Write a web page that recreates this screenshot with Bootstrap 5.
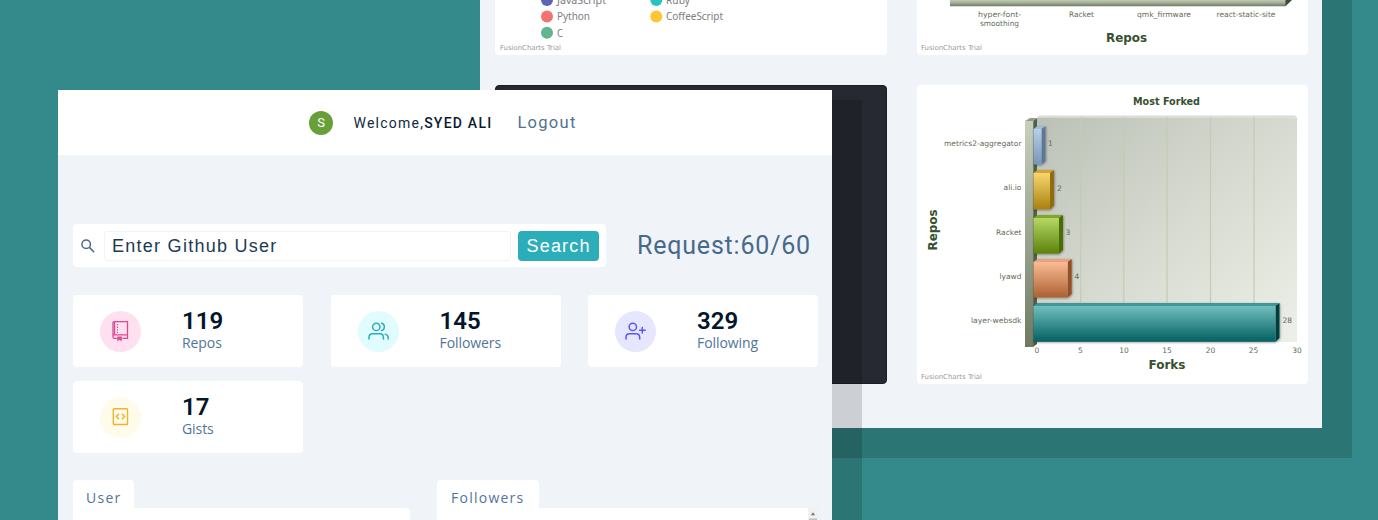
<!DOCTYPE html>
<html lang="en">
<head>
<meta charset="utf-8">
<meta name="viewport" content="width=device-width, initial-scale=1">
<title>Github User Dashboard</title>
<link href="https://cdn.jsdelivr.net/npm/bootstrap@5.3.0/dist/css/bootstrap.min.css" rel="stylesheet">
<style>
  body { margin: 0; background: #348a8a; font-family: Roboto, sans-serif; color: #102a42; }
  .scene { width: 1378px; height: 520px; background: #348a8a; }
  .win { background: #f0f4f8; box-shadow: 20px 20px 0 10px rgba(0,0,0,.15); }
  .win-back { left: 480px; top: -40px; width: 842px; height: 468px; padding: 40px 14px 0 15px; }
  .win-front { left: 58px; top: 90px; width: 774px; height: 600px; }
  .charts { display: grid; grid-template-columns: 392px 391px; column-gap: 30px; row-gap: 30px; grid-template-rows: 55px 299px; }
  .panel { background: #fff; border-radius: 0 0 4px 4px; overflow: hidden; }
  .panel-full { border-radius: 4px; }
  .panel svg { display: block; }
  .panel-dark { background: #262932; border: 1px solid #1b1d24; }
  .vd { font-family: "DejaVu Sans", sans-serif; }
  .topbar { height: 65px; background: #fff; padding-left: 251px; }
  .avatar { width: 24px; height: 24px; background: #689f38; color: #fff; font-size: 13px; }
  .welcome { font-size: 14px; letter-spacing: 1.23px; margin-left: 20.5px; padding-top: 1px; color: #102a42; white-space: nowrap; }
  .welcome b { font-weight: 500; color: #0a1c30; }
  .logout { font-size: 16.5px; letter-spacing: 1.3px; margin-left: 25px; padding-top: 1px; color: #4f7192; }
  .main { padding: 69px 14px 0 15px; }
  .searchbox { width: 533px; height: 43px; background: #fff; border-radius: 4px; padding: 0 7px 0 7px; }
  .field { width: 408px; height: 30px; border: 1px solid #f0f4f8; border-radius: 3px; margin-left: 8px; padding-left: 7px; font: 18px/28px "Liberation Sans", sans-serif; letter-spacing: 1.27px; color: #1c3a56; }
  .go { width: 81px; height: 30px; background: #2caeba; border: 0; border-radius: 4px; color: #fff; padding: 0; margin-left: 7px; font: 18px/30px "Liberation Sans", sans-serif; letter-spacing: 1.2px; }
  .request { font-size: 25px; letter-spacing: .8px; margin-left: 31px; padding-top: 1px; color: #48698c; white-space: nowrap; line-height: 42px; }
  .stats { display: grid; grid-template-columns: repeat(3, 230px); justify-content: space-between; row-gap: 14px; margin-top: 28px; }
  .stat { height: 72px; background: #fff; border-radius: 4px; padding-left: 27px; gap: 41px; }
  .disc { width: 41px; height: 41px; }
  .disc svg { width: 23px; height: 23px; }
  .num { font-size: 24px; line-height: 24px; font-weight: 600; letter-spacing: .1px; color: #02162c; }
  .lbl { font: 14px/20px "Open Sans", sans-serif; letter-spacing: -.08px; color: #52759a; }
  .pink { background: #ffe0f0; color: #da4a91; }
  .cyan { background: #e0fcff; color: #2caeba; }
  .violet { background: #e6e6ff; color: #5d55fa; }
  .yellow { background: #fffbea; color: #f0b429; }
  .boxes { display: grid; grid-template-columns: 337px 381px; column-gap: 27px; margin-top: 27px; }
  .tab { display: inline-block; height: 28px; background: #fff; border-radius: 4px 4px 0 0; padding: 0 13px; font: 14px/36px "Open Sans", sans-serif; letter-spacing: 1.25px; color: #52759a; vertical-align: top; }
  .tab-wide { padding: 0 14px; }
  .body-box { height: 120px; background: #fff; border-radius: 0 4px 0 0; }
  .scroller { width: 10px; background: #f1f1f1; }
  .scroller svg { display: block; }
</style>
</head>
<body>
<div class="scene position-relative overflow-hidden">

  <section class="win win-back position-absolute">
    <div class="charts">
      <div class="panel">
        <svg width="392" height="55" viewBox="495 0 392 55">
          <g font-family="'Noto Sans', sans-serif" font-size="11.200" fill="#7d7d7d">
            <circle cx="547" cy="0" r="6" fill="#5d62b5"/><text x="557" y="4" textLength="49" lengthAdjust="spacingAndGlyphs">JavaScript</text>
            <circle cx="656.300" cy="0" r="6" fill="#29c3be"/><text x="666" y="4" textLength="24" lengthAdjust="spacingAndGlyphs">Ruby</text>
            <circle cx="547" cy="16.500" r="6" fill="#f2726f"/><text x="557" y="20.400" textLength="33" lengthAdjust="spacingAndGlyphs">Python</text>
            <circle cx="656.300" cy="16.500" r="6" fill="#ffc533"/><text x="666" y="20.400" textLength="57" lengthAdjust="spacingAndGlyphs">CoffeeScript</text>
            <circle cx="547" cy="32.800" r="6" fill="#62b58f"/><text x="557" y="36.800" textLength="6" lengthAdjust="spacingAndGlyphs">C</text>
          </g>
          <text class="vd" x="500" y="50" font-size="6.900" fill="#999" textLength="61" lengthAdjust="spacingAndGlyphs">FusionCharts Trial</text>
        </svg>
      </div>
      <div class="panel">
        <svg width="391" height="55" viewBox="917 0 391 55">
          <defs><linearGradient id="base" x2="0" y2="1"><stop stop-color="#c0c9b4"/><stop offset=".4" stop-color="#a8b199"/><stop offset="1" stop-color="#6d785e"/></linearGradient></defs>
          <path fill="url(#base)" d="M950 0h336v6.300H950z"/><path fill="#3f4938" d="M1285.500 0h6.500l-6.500 6.300z"/>
          <g class="vd" font-size="7.500" fill="#5f6c56" text-anchor="middle">
            <text x="999.500" y="16.700" textLength="43" lengthAdjust="spacingAndGlyphs">hyper-font-</text><text x="999.500" y="25.500" textLength="39" lengthAdjust="spacingAndGlyphs">smoothing</text>
            <text x="1081.500" y="16.700" textLength="25" lengthAdjust="spacingAndGlyphs">Racket</text><text x="1164" y="16.700" textLength="54" lengthAdjust="spacingAndGlyphs">qmk_firmware</text><text x="1246" y="16.700" textLength="59" lengthAdjust="spacingAndGlyphs">react-static-site</text>
          </g>
          <text class="vd" x="1126.500" y="42" font-size="12" font-weight="700" fill="#37502e" text-anchor="middle" textLength="41" lengthAdjust="spacingAndGlyphs">Repos</text>
          <text class="vd" x="921" y="50" font-size="6.900" fill="#999" textLength="61" lengthAdjust="spacingAndGlyphs">FusionCharts Trial</text>
        </svg>
      </div>
      <div class="panel panel-full panel-dark"></div>
      <div class="panel panel-full">
        <svg width="391" height="299" viewBox="917 85 391 299">
          <defs>
            <linearGradient id="wall" x2="1" y2="1"><stop stop-color="#bcc1b8"/><stop offset=".5" stop-color="#d6dad0"/><stop offset="1" stop-color="#edf0e8"/></linearGradient>
            <linearGradient id="post" x2="0" y2="1"><stop stop-color="#c7d0bd"/><stop offset="1" stop-color="#6f7a63"/></linearGradient>
            <linearGradient id="b1" x2="0" y2="1"><stop stop-color="#b9d0e8"/><stop offset="1" stop-color="#7796b5"/></linearGradient>
            <linearGradient id="b2" x2="0" y2="1"><stop stop-color="#f8d66f"/><stop offset="1" stop-color="#a9800f"/></linearGradient>
            <linearGradient id="b3" x2="0" y2="1"><stop stop-color="#b5d766"/><stop offset="1" stop-color="#5b820b"/></linearGradient>
            <linearGradient id="b4" x2="0" y2="1"><stop stop-color="#fbbb94"/><stop offset="1" stop-color="#ab6133"/></linearGradient>
            <linearGradient id="b5" x2="0" y2="1"><stop stop-color="#70bfbe"/><stop offset="1" stop-color="#046061"/></linearGradient>
            <filter id="soft" x="-20%" y="-20%" width="150%" height="150%"><feDropShadow dx=".6" dy=".8" stdDeviation=".8" flood-opacity=".4"/></filter>
          </defs>
          <text class="vd" x="1166.500" y="105" font-size="9.900" font-weight="700" fill="#37502e" text-anchor="middle" textLength="67" lengthAdjust="spacingAndGlyphs">Most Forked</text>
          <path fill="#d9ddd4" d="M1039 115.500h256l2 2h-260z"/>
          <path fill="url(#wall)" d="M1037 117.500h260V342h-260z"/>
          <path stroke="#c3ccb3" stroke-width="1.200" d="M1080.700 117v225M1123.800 117v225M1167 117v225M1210.500 117v225M1254 117v225"/>
          <path fill="#535f4c" d="M1033 121l4-3v226l-4 3z"/>
          <path fill="url(#post)" d="M1025 121h8.300v226h-8.300z"/>
          <path fill="#929f87" d="M1025 121l5-3h7l-3.700 3z"/>
          <g filter="url(#soft)"><path fill="#9fbddb" d="M1033.500 129l4-3h8l-4 3z"/><path fill="#5d7897" d="M1041.500 129l4-3v35l-4 3.500z"/><path fill="url(#b1)" d="M1033.500 129h8v35.500h-8z"/></g>
          <g filter="url(#soft)"><path fill="#d0a532" d="M1033.500 173l4-3h16.500l-4 3z"/><path fill="#906c0c" d="M1050 173l4-3v35.500l-4 4z"/><path fill="url(#b2)" d="M1033.500 173h16.500v36.500h-16.500z"/></g>
          <g filter="url(#soft)"><path fill="#80a828" d="M1033.500 218l4-3h25.500l-4 3z"/><path fill="#4a6d04" d="M1059 218l4-3v35l-4 3.700z"/><path fill="url(#b3)" d="M1033.500 218h25.500v35.700h-25.500z"/></g>
          <g filter="url(#soft)"><path fill="#e8a27b" d="M1033.500 262l4-3h34.200l-4 3z"/><path fill="#954f27" d="M1067.700 262l4-3v35l-4 3.500z"/><path fill="url(#b4)" d="M1033.500 262h34.200v35.500h-34.200z"/></g>
          <g filter="url(#soft)"><path fill="#3c9897" d="M1033.500 306l4-3h242l-4 3z"/><path fill="#043c3d" d="M1275.500 306l4-3v35l-4 3.700z"/><path fill="url(#b5)" d="M1033.500 306h242v35.700h-242z"/></g>
          <g class="vd" font-size="7.500" fill="#5f6c56">
            <g text-anchor="end">
              <text x="1021.500" y="145.500" textLength="77.500" lengthAdjust="spacingAndGlyphs">metrics2-aggregator</text><text x="1021.500" y="189.500" textLength="18" lengthAdjust="spacingAndGlyphs">ali.io</text><text x="1021.500" y="234.500" textLength="25.500" lengthAdjust="spacingAndGlyphs">Racket</text><text x="1021.500" y="278.500" textLength="22" lengthAdjust="spacingAndGlyphs">lyawd</text><text x="1021.500" y="322.500" textLength="50.500" lengthAdjust="spacingAndGlyphs">layer-websdk</text>
            </g>
            <g><text x="1048" y="146">1</text><text x="1057" y="190.500">2</text><text x="1065.500" y="234.500">3</text><text x="1074.500" y="278.500">4</text><text x="1282.500" y="322.500">28</text></g>
            <g text-anchor="middle"><text x="1037" y="352.700">0</text><text x="1080.500" y="352.700">5</text><text x="1124" y="352.700">10</text><text x="1167" y="352.700">15</text><text x="1210.500" y="352.700">20</text><text x="1253.500" y="352.700">25</text><text x="1297" y="352.700">30</text></g>
          </g>
          <g class="vd" font-size="12" font-weight="700" fill="#37502e" text-anchor="middle">
            <text x="1167" y="369" textLength="37" lengthAdjust="spacingAndGlyphs">Forks</text>
            <text transform="translate(937 230) rotate(-90)" textLength="41" lengthAdjust="spacingAndGlyphs">Repos</text>
          </g>
          <text class="vd" x="921" y="379" font-size="6.900" fill="#999" textLength="61" lengthAdjust="spacingAndGlyphs">FusionCharts Trial</text>
        </svg>
      </div>
    </div>
  </section>

  <section class="win win-front position-absolute">
    <nav class="topbar d-flex align-items-center">
      <span class="avatar rounded-circle d-flex align-items-center justify-content-center">S</span>
      <span class="welcome">Welcome,<b>SYED ALI</b></span>
      <span class="logout">Logout</span>
    </nav>
    <div class="main">
      <div class="d-flex align-items-center">
        <div class="searchbox d-flex align-items-center">
          <svg width="16" height="16" viewBox="0 0 16 16" fill="none" stroke="#48698c" stroke-width="1.500"><circle cx="6.200" cy="6.200" r="4.300"/><path d="M9.400 9.400l4.800 4.800"/></svg>
          <div class="field">Enter Github User</div>
          <button class="go" type="button">Search</button>
        </div>
        <div class="request">Request:60/60</div>
      </div>

      <div class="stats">
        <div class="stat d-flex align-items-center">
          <span class="disc pink rounded-circle d-flex align-items-center justify-content-center">
            <svg viewBox="0 0 23 23" fill="none" stroke="currentColor" stroke-width="1.300"><path d="M8.500 18.300H5.300q-1.300 0-1.300-1.300V3q0-1.300 1.300-1.300h13.200v16.600h-5M4 14.900h14.500"/><path stroke-width="1.300" d="M5.500 2v13"/><path stroke-dasharray="1.300 1.300" stroke-width="1.100" d="M8.500 4v9.500"/><path fill="currentColor" stroke="none" d="M8.300 16.500h4.500v5l-2.250-1.700-2.250 1.700z"/></svg>
          </span>
          <div><div class="num">119</div><div class="lbl">Repos</div></div>
        </div>
        <div class="stat d-flex align-items-center">
          <span class="disc cyan rounded-circle d-flex align-items-center justify-content-center">
            <svg viewBox="0 0 23 23" fill="none" stroke="currentColor" stroke-width="1.500" stroke-linecap="round"><circle cx="9.300" cy="6.900" r="3.700"/><path d="M2 19v-1.500q0-3.700 3.700-3.700h7q3.700 0 3.700 3.700V19M14.500 3.300a3.700 3.700 0 0 1 0 7.200M18.300 14.100q2.900.8 2.900 3.700V19"/></svg>
          </span>
          <div><div class="num">145</div><div class="lbl">Followers</div></div>
        </div>
        <div class="stat d-flex align-items-center">
          <span class="disc violet rounded-circle d-flex align-items-center justify-content-center">
            <svg viewBox="0 0 23 23" fill="none" stroke="currentColor" stroke-width="1.500" stroke-linecap="round"><circle cx="8.800" cy="6.900" r="3.700"/><path d="M2 19v-1.500q0-3.700 3.700-3.700h6.300q3.700 0 3.700 3.700V19M18.300 7.500v5.400M15.600 10.200h5.600"/></svg>
          </span>
          <div><div class="num">329</div><div class="lbl">Following</div></div>
        </div>
        <div class="stat d-flex align-items-center">
          <span class="disc yellow rounded-circle d-flex align-items-center justify-content-center">
            <svg viewBox="0 0 23 23" fill="none" stroke="currentColor" stroke-width="1.400"><rect x="4.300" y="2.700" width="14.200" height="15.800" rx=".8"/><path d="M10 7.800l-2.600 2.700 2.600 2.700M13 7.800l2.600 2.700-2.600 2.700"/></svg>
          </span>
          <div><div class="num">17</div><div class="lbl">Gists</div></div>
        </div>
      </div>

      <div class="boxes">
        <div><span class="tab">User</span><div class="body-box"></div></div>
        <div><span class="tab tab-wide">Followers</span>
          <div class="body-box d-flex justify-content-end"><div class="scroller"><svg width="10" height="120" viewBox="0 0 10 120"><path fill="#777" d="M5 4.300l2.200 2.900H2.800z"/><path fill="#c1c1c1" d="M1 10.500h8V90H1z"/></svg></div></div>
        </div>
      </div>
    </div>
  </section>
</div>
<script src="https://cdn.jsdelivr.net/npm/bootstrap@5.3.0/dist/js/bootstrap.bundle.min.js"></script>
</body>
</html>
